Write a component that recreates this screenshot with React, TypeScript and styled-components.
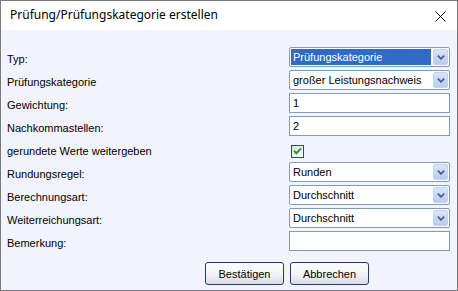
import React from 'react'
import styled, { createGlobalStyle } from 'styled-components'

const GlobalStyle = createGlobalStyle`
	html, body {
		margin: 0;
		padding: 0;
		background: #ffffff;
	}
	body {
		font-family: "Liberation Sans", Arial, sans-serif;
		font-size: 11px;
		color: #000;
	}
`

const Dialog = styled.div`
	box-sizing: border-box;
	width: 458px;
	height: 291px;
	border: 1px solid #7a7a7a;
	display: flex;
	flex-direction: column;
	background: #f3f3fd;
`

const TitleBar = styled.div`
	height: 29px;
	background: #ffffff;
	display: flex;
	align-items: center;
	justify-content: space-between;
	padding: 0 9px 0 9px;
	font-family: "Noto Sans", "Open Sans", sans-serif;
	font-size: 12px;
	color: #000;
`

const Title = styled.span`
	margin-top: -2px;
`

const CloseButton = styled.button`
	border: 0;
	background: none;
	padding: 0;
	width: 13px;
	height: 13px;
	display: flex;
	align-items: center;
	justify-content: center;
	margin-right: 1px;
	margin-top: 1px;
`

const Body = styled.div`
	flex: 1;
	padding: 17px 7px 0 6px;
	display: flex;
	flex-direction: column;
`

const Form = styled.div`
	display: grid;
	grid-template-columns: 1fr 161px;
	grid-auto-rows: 20px;
	row-gap: 3px;
`

const Label = styled.label`
	display: flex;
	align-items: center;
	padding-top: 4px;
`

const Field = styled.div`
	display: flex;
	align-items: center;
`

const SelectBox = styled.div`
	box-sizing: border-box;
	width: 100%;
	height: 20px;
	border: 1px solid #7f9db9;
	border-radius: 2px;
	background: #fff;
	display: flex;
	align-items: stretch;
	padding: 1px;
`

const SelectValue = styled.div<{ $selected?: boolean }>`
	flex: 1;
	display: flex;
	align-items: center;
	padding-left: 2px;
	margin-right: 2px;
	background: ${p => (p.$selected ? '#316ac5' : 'transparent')};
	color: ${p => (p.$selected ? '#fff' : '#000')};
`

const ArrowButton = styled.div`
	box-sizing: border-box;
	width: 15px;
	border: 1px solid #c3d3f3;
	border-radius: 2px;
	background: linear-gradient(#dbe5f9, #b9cbef);
	display: flex;
	align-items: center;
	justify-content: center;
`

const TextInput = styled.div`
	box-sizing: border-box;
	width: 100%;
	height: 20px;
	border: 1px solid #7f9db9;
	background: #fff;
	display: flex;
	align-items: center;
	padding-left: 3px;
`

const Checkbox = styled.div`
	box-sizing: border-box;
	width: 13px;
	height: 13px;
	margin-left: 2px;
	margin-top: 4px;
	border: 1px solid #1c5180;
	background: linear-gradient(135deg, #dcdcd7, #ffffff);
	display: flex;
	align-items: center;
	justify-content: center;
`

const Footer = styled.div`
	display: flex;
	gap: 6px;
	padding-left: 198px;
	margin-top: 11px;
`

const Button = styled.button`
	box-sizing: border-box;
	width: 79px;
	height: 23px;
	border: 1px solid #1f3c73;
	border-radius: 3px;
	background: linear-gradient(#ffffff 0%, #f3f3f7 55%, #d9d9e6 100%);
	font-family: "Liberation Sans", Arial, sans-serif;
	font-size: 11px;
	color: #000;
	padding: 0;
`

function Chevron() {
	return (
		<svg width="8" height="5" viewBox="0 0 8 5">
			<path d="M0.8 0.6 L4 3.8 L7.2 0.6" fill="none" stroke="#4d6185" strokeWidth="1.8" />
		</svg>
	)
}

function Select(props: { value: string; selected?: boolean }) {
	return (
		<SelectBox>
			<SelectValue $selected={props.selected}>{props.value}</SelectValue>
			<ArrowButton>
				<Chevron />
			</ArrowButton>
		</SelectBox>
	)
}

export default function App() {
	return (
		<>
			<GlobalStyle />
			<Dialog>
				<TitleBar>
					<Title>Prüfung/Prüfungskategorie erstellen</Title>
					<CloseButton aria-label="Schließen">
						<svg width="11" height="11" viewBox="0 0 11 11">
							<path d="M0.5 0.5 L10.5 10.5 M10.5 0.5 L0.5 10.5" stroke="#000" strokeWidth="1" />
						</svg>
					</CloseButton>
				</TitleBar>
				<Body>
					<Form>
						<Label>Typ:</Label>
						<Field><Select value="Prüfungskategorie" selected /></Field>

						<Label>Prüfungskategorie</Label>
						<Field><Select value="großer Leistungsnachweis" /></Field>

						<Label>Gewichtung:</Label>
						<Field><TextInput>1</TextInput></Field>

						<Label>Nachkommastellen:</Label>
						<Field><TextInput>2</TextInput></Field>

						<Label>gerundete Werte weitergeben</Label>
						<Field>
							<Checkbox>
								<svg width="9" height="8" viewBox="0 0 9 8">
									<path d="M1 3.8 L3.4 6.2 L8 1.4" fill="none" stroke="#21a121" strokeWidth="2" />
								</svg>
							</Checkbox>
						</Field>

						<Label>Rundungsregel:</Label>
						<Field><Select value="Runden" /></Field>

						<Label>Berechnungsart:</Label>
						<Field><Select value="Durchschnitt" /></Field>

						<Label>Weiterreichungsart:</Label>
						<Field><Select value="Durchschnitt" /></Field>

						<Label>Bemerkung:</Label>
						<Field><TextInput /></Field>
					</Form>
					<Footer>
						<Button>Bestätigen</Button>
						<Button>Abbrechen</Button>
					</Footer>
				</Body>
			</Dialog>
		</>
	)
}
